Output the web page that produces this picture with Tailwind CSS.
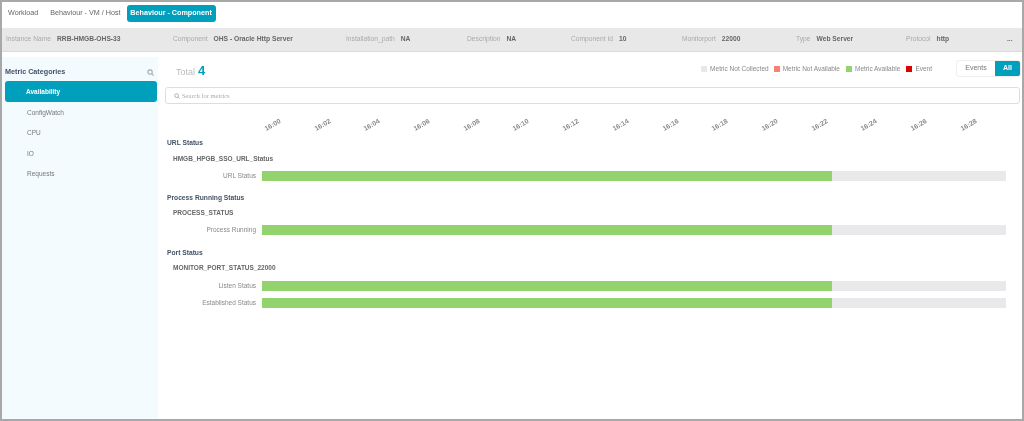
<!DOCTYPE html>
<html lang="en">
<head>
  <meta charset="UTF-8">
  <title>Behaviour - Component</title>
  <script src="https://cdn.jsdelivr.net/npm/@tailwindcss/browser@4"></script>
</head>
<body class="bg-white font-['Liberation_Sans',sans-serif] overflow-hidden">
  <div class="w-[1024px] h-[421px] border-2 border-[#a8a8a8] flex flex-col overflow-hidden blur-[0.3px]">
    <!-- Tabs -->
    <div class="h-[26px] flex items-center pl-[6px] pb-[4px] gap-[12px] text-[7.2px] text-[#666] whitespace-nowrap">
      <span>Workload</span>
      <span>Behaviour - VM / Host</span>
      <span class="-ml-[6px] bg-[#00a0bc] text-white font-bold rounded-[3px] h-[17px] w-[89px] flex items-center justify-center">Behaviour - Component</span>
    </div>

    <!-- Instance info -->
    <div class="h-[24px] bg-[#e8e8e8] border-b border-[#dcdcdc] flex items-center pl-[4px] text-[6.7px] whitespace-nowrap">
      <div class="w-[167px] flex gap-[6px]"><span class="text-[#aaa]">Instance Name</span><span class="font-bold text-[#666]">RRB-HMGB-OHS-33</span></div>
      <div class="w-[173px] flex gap-[6px]"><span class="text-[#aaa]">Component</span><span class="font-bold text-[#666]">OHS - Oracle Http Server</span></div>
      <div class="w-[121px] flex gap-[6px]"><span class="text-[#aaa]">Installation_path</span><span class="font-bold text-[#666]">NA</span></div>
      <div class="w-[104px] flex gap-[6px]"><span class="text-[#aaa]">Description</span><span class="font-bold text-[#666]">NA</span></div>
      <div class="w-[111px] flex gap-[6px]"><span class="text-[#aaa]">Component Id</span><span class="font-bold text-[#666]">10</span></div>
      <div class="w-[114px] flex gap-[6px]"><span class="text-[#aaa]">Monitorport</span><span class="font-bold text-[#666]">22000</span></div>
      <div class="w-[110px] flex gap-[6px]"><span class="text-[#aaa]">Type</span><span class="font-bold text-[#666]">Web Server</span></div>
      <div class="w-[101px] flex gap-[6px]"><span class="text-[#aaa]">Protocol</span><span class="font-bold text-[#666]">http</span></div>
      <span class="font-bold text-[#666]">...</span>
    </div>

    <div class="flex-1 flex pt-[5px] min-h-0">
      <!-- Sidebar -->
      <aside class="w-[156px] bg-[#f3fbff] shrink-0 pl-[3px] pr-[1px] text-[6.5px] text-[#777]">
        <div class="h-[24px] flex items-center justify-between pr-[3px] pt-[7px]">
          <span class="font-bold text-[7.2px] text-[#445266]">Metric Categories</span>
          <svg class="w-[7px] h-[7px] text-[#aaa]" viewBox="0 0 16 16" fill="none" stroke="currentColor" stroke-width="2.5"><circle cx="7" cy="7" r="5"/><path d="M11 11l4 4"/></svg>
        </div>
        <div class="h-[21px] bg-[#00a0bc] rounded-[3px] text-white font-bold flex items-center pl-[21px]">Availability</div>
        <div class="pl-[22px] flex flex-col">
          <span class="h-[21px] flex items-center">ConfigWatch</span>
          <span class="h-[20px] flex items-center">CPU</span>
          <span class="h-[21px] flex items-center">IO</span>
          <span class="h-[20px] flex items-center">Requests</span>
        </div>
      </aside>

      <!-- Main -->
      <main class="flex-1 min-w-0 pl-[7px] pr-[2px]">
        <div class="h-[30px] -mr-[1px] flex items-start justify-between pt-[3px]">
          <div class="flex items-baseline gap-[3px] pl-[11px] pt-[1px] text-[#bbb] text-[9px]">Total <span class="text-[#00a0bc] font-bold text-[13px]">4</span></div>
          <div class="flex items-center text-[6.5px] text-[#888]">
            <span class="w-[6px] h-[6px] bg-[#e8e8e8] mr-[3px]"></span><span class="mr-[5px]">Metric Not Collected</span>
            <span class="w-[6px] h-[6px] bg-[#fa8072] mr-[3px]"></span><span class="mr-[6px]">Metric Not Available</span>
            <span class="w-[6px] h-[6px] bg-[#92d36e] mr-[3px]"></span><span class="mr-[6px]">Metric Available</span>
            <span class="w-[6px] h-[6px] bg-[#e00000] mr-[3px]"></span><span class="mr-[24px]">Event</span>
            <div class="flex h-[17px] w-[65px] text-[7px] border border-[#eee] rounded-[3px] overflow-hidden">
              <span class="w-[38px] flex items-center justify-center text-[#777]">Events</span>
              <span class="flex-1 flex items-center justify-center bg-[#00a0bc] text-white font-bold">All</span>
            </div>
          </div>
        </div>

        <div class="h-[17px] w-[855px] border border-[#ddd] rounded-[3px] flex items-center gap-[2px] pl-[8px] font-['Liberation_Serif',serif] text-[6.5px] text-[#aaa]">
          <svg class="w-[6px] h-[6px]" viewBox="0 0 16 16" fill="none" stroke="currentColor" stroke-width="2.5"><circle cx="7" cy="7" r="5"/><path d="M11 11l4 4"/></svg>
          Search for metrics
        </div>

        <!-- Time axis -->
        <div class="h-[33px] pt-[10px] pl-[83px] w-[865px] flex items-center text-[6.8px] text-[#888] font-bold">
          <span class="w-[49.7px] text-center -rotate-30">16:00</span>
          <span class="w-[49.7px] text-center -rotate-30">16:02</span>
          <span class="w-[49.7px] text-center -rotate-30">16:04</span>
          <span class="w-[49.7px] text-center -rotate-30">16:06</span>
          <span class="w-[49.7px] text-center -rotate-30">16:08</span>
          <span class="w-[49.7px] text-center -rotate-30">16:10</span>
          <span class="w-[49.7px] text-center -rotate-30">16:12</span>
          <span class="w-[49.7px] text-center -rotate-30">16:14</span>
          <span class="w-[49.7px] text-center -rotate-30">16:16</span>
          <span class="w-[49.7px] text-center -rotate-30">16:18</span>
          <span class="w-[49.7px] text-center -rotate-30">16:20</span>
          <span class="w-[49.7px] text-center -rotate-30">16:22</span>
          <span class="w-[49.7px] text-center -rotate-30">16:24</span>
          <span class="w-[49.7px] text-center -rotate-30">16:26</span>
          <span class="w-[49.7px] text-center -rotate-30">16:28</span>
        </div>

        <!-- URL Status -->
        <h3 class="h-[12px] pl-[2px] flex items-center text-[6.7px] font-bold text-[#445266]">URL Status</h3>
        <div class="h-[16px] pl-[8px] mt-[2px] flex items-center text-[6.5px] font-bold text-[#666]">HMGB_HPGB_SSO_URL_Status</div>
        <div class="flex items-center h-[10px] mt-[4px]">
          <span class="w-[97px] text-right pr-[6px] text-[6.5px] text-[#888]">URL Status</span>
          <div class="w-[744px] h-[10px] bg-[#e9e8ea]"><div class="h-full w-[570px] bg-[#92d36e]"></div></div>
        </div>

        <!-- Process Running Status -->
        <h3 class="h-[12px] mt-[11px] pl-[2px] flex items-center text-[6.7px] font-bold text-[#445266]">Process Running Status</h3>
        <div class="h-[16px] pl-[8px] mt-[1px] flex items-center text-[6.5px] font-bold text-[#666]">PROCESS_STATUS</div>
        <div class="flex items-center h-[10px] mt-[4px]">
          <span class="w-[97px] text-right pr-[6px] text-[6.5px] text-[#888]">Process Running</span>
          <div class="w-[744px] h-[10px] bg-[#e9e8ea]"><div class="h-full w-[570px] bg-[#92d36e]"></div></div>
        </div>

        <!-- Port Status -->
        <h3 class="h-[12px] mt-[12px] pl-[2px] flex items-center text-[6.7px] font-bold text-[#445266]">Port Status</h3>
        <div class="h-[16px] pl-[8px] mt-[1px] flex items-center text-[6.5px] font-bold text-[#666]">MONITOR_PORT_STATUS_22000</div>
        <div class="flex items-center h-[10px] mt-[5px]">
          <span class="w-[97px] text-right pr-[6px] text-[6.5px] text-[#888]">Listen Status</span>
          <div class="w-[744px] h-[10px] bg-[#e9e8ea]"><div class="h-full w-[570px] bg-[#92d36e]"></div></div>
        </div>
        <div class="flex items-center h-[10px] mt-[7px]">
          <span class="w-[97px] text-right pr-[6px] text-[6.5px] text-[#888]">Established Status</span>
          <div class="w-[744px] h-[10px] bg-[#e9e8ea]"><div class="h-full w-[570px] bg-[#92d36e]"></div></div>
        </div>
      </main>
    </div>
  </div>
</body>
</html>
